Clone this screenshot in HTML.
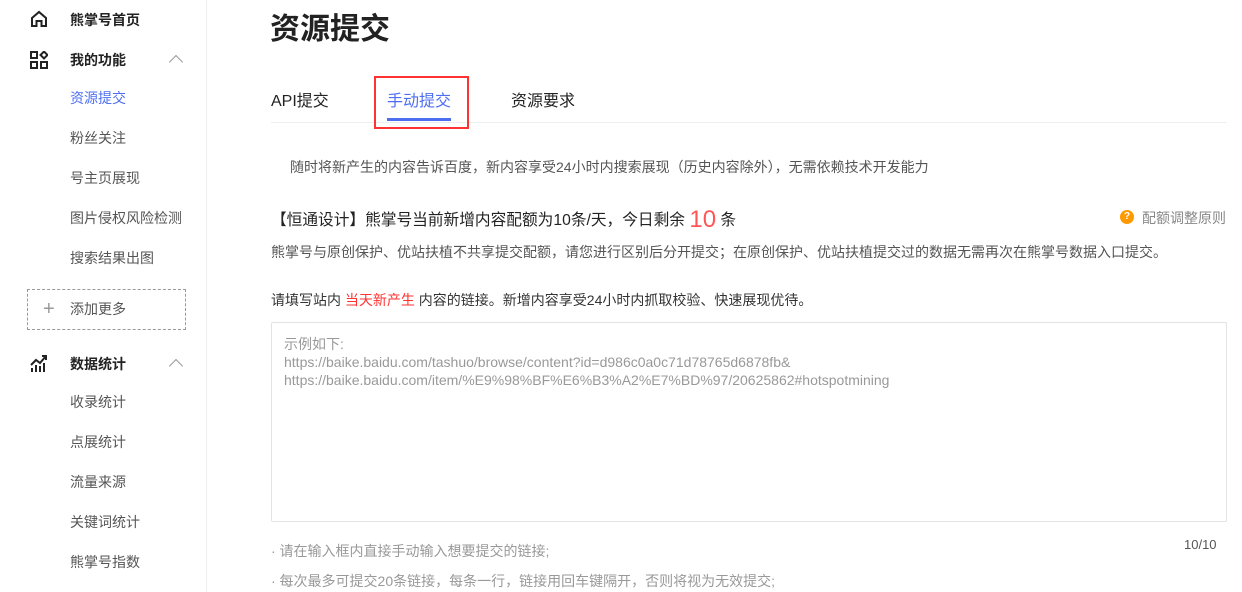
<!DOCTYPE html>
<html><head><meta charset="utf-8"><style>
*{margin:0;padding:0;box-sizing:border-box}
body{width:1242px;height:592px;overflow:hidden;background:#fff;font-family:"Liberation Sans","Noto Sans CJK SC",sans-serif;color:#333;position:relative}
.a{position:absolute;white-space:nowrap}
.side{position:absolute;left:0;top:0;width:207px;height:592px;border-right:1px solid #eee}
.g{font-size:14px;font-weight:bold;color:#222;left:70px}
.i{font-size:14px;color:#555;left:70px}
.chev{left:171px;width:10px;height:10px;border-left:1.5px solid #999;border-top:1.5px solid #999;transform:rotate(45deg)}
</style></head><body>
<div class="side">
<svg class="a" style="left:30px;top:10px" width="18" height="18" viewBox="0 0 18 18" fill="none" stroke="#222" stroke-width="2"><path d="M2 8L9 2l7 6v8h-4.5v-5h-5v5H2z"/></svg>
<div class="a g" style="top:10px">熊掌号首页</div>
<svg class="a" style="left:30px;top:51px" width="18" height="18" viewBox="0 0 18 18" fill="none" stroke="#222" stroke-width="2"><rect x="1" y="1" width="6" height="6"/><rect x="1" y="11" width="6" height="6"/><rect x="11" y="11" width="6" height="6"/><path d="M14 0.5l3.5 3.5-3.5 3.5-3.5-3.5z"/></svg>
<div class="a g" style="top:50px">我的功能</div>
<div class="a chev" style="top:57px"></div>
<div class="a i" style="top:88px;color:#4e6ef2">资源提交</div>
<div class="a i" style="top:128px">粉丝关注</div>
<div class="a i" style="top:168px">号主页展现</div>
<div class="a i" style="top:208px">图片侵权风险检测</div>
<div class="a i" style="top:248px">搜索结果出图</div>
<div class="a" style="left:27px;top:289px;width:159px;height:41px;border:1px dashed #999"></div>
<div class="a" style="left:43px;top:300px;font-size:20px;line-height:18px;color:#999">+</div>
<div class="a i" style="top:299px">添加更多</div>
<svg class="a" style="left:30px;top:354px" width="18" height="18" viewBox="0 0 18 18" fill="none" stroke="#222" stroke-width="2"><path d="M2 18v-4M6 18v-7M10 18v-6M14 18v-9M1 11l5-5 4 3 6-7M12 2h4v4"/></svg>
<div class="a g" style="top:354px">数据统计</div>
<div class="a chev" style="top:361px"></div>
<div class="a i" style="top:392px">收录统计</div>
<div class="a i" style="top:432px">点展统计</div>
<div class="a i" style="top:472px">流量来源</div>
<div class="a i" style="top:512px">关键词统计</div>
<div class="a i" style="top:552px">熊掌号指数</div>
</div>
<div class="a" style="left:270px;top:4px;font-size:30px;font-weight:bold;color:#222">资源提交</div>
<div class="a" style="left:271px;top:87px;font-size:16px;color:#222">API提交</div>
<div class="a" style="left:387px;top:87px;font-size:16px;color:#4e6ef2">手动提交</div>
<div class="a" style="left:511px;top:87px;font-size:16px;color:#222">资源要求</div>
<div class="a" style="left:271px;top:122px;width:956px;height:1px;background:#eee"></div>
<div class="a" style="left:387px;top:118px;width:64px;height:3px;background:#4e6ef2"></div>
<div class="a" style="left:374px;top:76px;width:95px;height:53px;border:2px solid #f33"></div>
<div class="a" style="left:290px;top:157px;font-size:14px;color:#555">随时将新产生的内容告诉百度，新内容享受24小时内搜索展现（历史内容除外），无需依赖技术开发能力</div>
<div class="a" style="left:271px;top:208px;font-size:15.7px;color:#222;line-height:24px">【恒通设计】熊掌号当前新增内容配额为10条/天，今日剩余 <span style="color:#f55;font-size:24px;vertical-align:-2px">10</span> 条</div>
<div class="a" style="left:1120px;top:210px;width:14px;height:14px;border-radius:50%;background:#f90;color:#fff;font-size:10px;text-align:center;line-height:14px;font-weight:bold">?</div>
<div class="a" style="left:1142px;top:208px;font-size:14px;color:#888">配额调整原则</div>
<div class="a" style="left:271px;top:242px;font-size:14px;color:#555">熊掌号与原创保护、优站扶植不共享提交配额，请您进行区别后分开提交；在原创保护、优站扶植提交过的数据无需再次在熊掌号数据入口提交。</div>
<div class="a" style="left:271px;top:290px;font-size:14px;color:#333">请填写站内 <span style="color:#f33">当天新产生</span> 内容的链接。新增内容享受24小时内抓取校验、快速展现优待。</div>
<div class="a" style="left:271px;top:322px;width:956px;height:200px;border:1px solid #e3e3e3;border-radius:2px"></div>
<div class="a" style="left:284px;top:335px;font-size:14px;color:#999;line-height:18px">示例如下:<br>https://baike.baidu.com/tashuo/browse/content?id=d986c0a0c71d78765d6878fb&amp;<br>https://baike.baidu.com/item/%E9%98%BF%E6%B3%A2%E7%BD%97/20625862#hotspotmining</div>
<div class="a" style="left:1184px;top:537px;font-size:13px;color:#555">10/10</div>
<div class="a" style="left:271px;top:541px;font-size:14px;color:#999">· 请在输入框内直接手动输入想要提交的链接;</div>
<div class="a" style="left:271px;top:571px;font-size:14px;color:#999">· 每次最多可提交20条链接，每条一行，链接用回车键隔开，否则将视为无效提交;</div>
</body></html>
